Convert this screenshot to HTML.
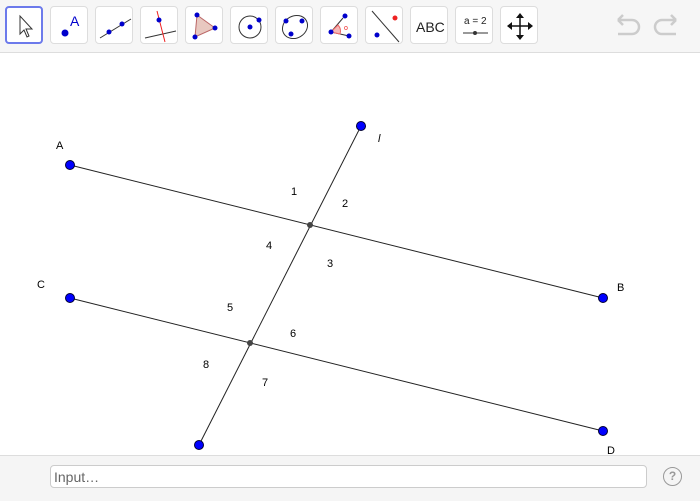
<!DOCTYPE html>
<html><head><style>
body{margin:0;width:700px;height:500px;overflow:hidden;font-family:"Liberation Sans",sans-serif;background:#fff;position:relative}
.tb{position:absolute;left:0;top:0;width:700px;height:52px;background:#f6f6f6;border-bottom:1px solid #ddd}
.b{position:absolute;top:6px;width:38px;height:38px;background:#fff;border:1px solid #ddd;border-radius:4px;box-sizing:border-box}
.b svg{position:absolute;left:0;top:0}
.bot{position:absolute;left:0;top:455px;width:700px;height:45px;background:#f5f5f5;border-top:1px solid #ddd}
.inp{position:absolute;left:50px;top:9px;width:597px;height:23px;background:#fff;border:1px solid #ccc;border-radius:4px;box-sizing:border-box;font-size:14px;color:#666;padding:3px 3px;line-height:16px}
.q{position:absolute;left:663px;top:11px;width:17px;height:17px;border:1.5px solid #999;border-radius:50%;color:#999;font-size:12px;text-align:center;line-height:17px;font-weight:bold}
</style></head><body>
<div class="tb">
<div class="b" style="left:5px;border:2px solid #6c7aeb"><svg width="36" height="36"><path d="M13 8 L13 26 L17 22 L20 29 L22 28 L19 21 L25 21 Z" fill="#fff" stroke="#333" stroke-width="1"/></svg></div>
<div class="b" style="left:50px"><svg width="38" height="38"><circle cx="14" cy="26" r="3.5" fill="#00c"/><text x="19" y="19" font-size="14" fill="#00c" font-family="Liberation Sans">A</text></svg></div>
<div class="b" style="left:95px"><svg width="38" height="38"><line x1="4" y1="31" x2="35" y2="12" stroke="#333"/><circle cx="13" cy="25" r="2.5" fill="#00c"/><circle cx="26" cy="17" r="2.5" fill="#00c"/></svg></div>
<div class="b" style="left:140px"><svg width="38" height="38"><line x1="4" y1="31" x2="35" y2="24" stroke="#333"/><line x1="16" y1="4" x2="24" y2="35" stroke="#e22"/><circle cx="18" cy="13" r="2.5" fill="#00c"/></svg></div>
<div class="b" style="left:185px"><svg width="38" height="38"><path d="M11 8 L29 21 L9 30 Z" fill="#e8c8c0" stroke="#b66"/><circle cx="11" cy="8" r="2.5" fill="#00c"/><circle cx="29" cy="21" r="2.5" fill="#00c"/><circle cx="9" cy="30" r="2.5" fill="#00c"/></svg></div>
<div class="b" style="left:230px"><svg width="38" height="38"><circle cx="19" cy="20" r="11" fill="none" stroke="#333"/><circle cx="19" cy="20" r="2.5" fill="#00c"/><circle cx="28" cy="13" r="2.5" fill="#00c"/></svg></div>
<div class="b" style="left:275px"><svg width="38" height="38"><ellipse cx="19" cy="20" rx="13" ry="11" fill="none" stroke="#333" transform="rotate(-30 19 20)"/><circle cx="10" cy="14" r="2.5" fill="#00c"/><circle cx="26" cy="14" r="2.5" fill="#00c"/><circle cx="15" cy="27" r="2.5" fill="#00c"/></svg></div>
<div class="b" style="left:320px"><svg width="38" height="38"><path d="M10 25 L22 11 M10 25 L28 29" stroke="#333"/><path d="M10 25 L17 18 A9 9 0 0 1 19 27 Z" fill="#f5b8b8" stroke="#e66"/><circle cx="10" cy="25" r="2.5" fill="#00c"/><circle cx="24" cy="9" r="2.5" fill="#00c"/><circle cx="28" cy="29" r="2.5" fill="#00c"/><text x="23" y="23" font-size="7" fill="#e22">o</text></svg></div>
<div class="b" style="left:365px"><svg width="38" height="38"><line x1="6" y1="4" x2="33" y2="35" stroke="#333"/><circle cx="29" cy="11" r="2.5" fill="#e22"/><circle cx="11" cy="28" r="2.5" fill="#00c"/></svg></div>
<div class="b" style="left:410px"><svg width="38" height="38"><text x="5" y="25" font-size="14" fill="#222" font-family="Liberation Sans">ABC</text></svg></div>
<div class="b" style="left:455px"><svg width="38" height="38"><text x="8" y="17" font-size="10" fill="#222" font-family="Liberation Sans">a = 2</text><line x1="7" y1="26" x2="32" y2="26" stroke="#333"/><circle cx="19" cy="26" r="2" fill="#333"/></svg></div>
<div class="b" style="left:500px"><svg width="38" height="38"><path d="M19 8 V31 M8 19 H30" stroke="#111" stroke-width="1.5"/><path d="M19 6 L15 11 H23Z M19 33 L15 28 H23Z M6 19 L11 15 V23Z M32 19 L27 15 V23Z" fill="#111"/></svg></div>
<svg style="position:absolute;left:612px;top:12px" width="70" height="30"><path d="M6 8 H20 A7 7 0 0 1 20 22 H6 M6 8 L11 3 M6 8 L11 13" fill="none" stroke="#ccc" stroke-width="2.5"/><path d="M64 8 H50 A7 7 0 0 0 50 22 H64 M64 8 L59 3 M64 8 L59 13" fill="none" stroke="#ccc" stroke-width="2.5"/></svg>
</div>
<svg style="position:absolute;left:0;top:0" width="700" height="455">
<g stroke="#222" stroke-width="1">
<line x1="70" y1="165" x2="603" y2="298"/><line x1="70" y1="298" x2="603" y2="431"/><line x1="199" y1="445" x2="361" y2="126"/></g>
<g fill="#00f" stroke="#003" stroke-width="1"><circle cx="70" cy="165" r="4.5"/><circle cx="603" cy="298" r="4.5"/><circle cx="70" cy="298" r="4.5"/><circle cx="603" cy="431" r="4.5"/><circle cx="361" cy="126" r="4.5"/><circle cx="199" cy="445" r="4.5"/></g>
<circle cx="310" cy="225" r="3" fill="#444"/><circle cx="250" cy="343" r="3" fill="#444"/>
<g font-size="11" fill="#000" font-family="Liberation Sans">
<text x="56" y="149">A</text><text x="617" y="291">B</text><text x="37" y="288">C</text><text x="607" y="454">D</text><text x="378" y="142" font-style="italic">l</text>
<text x="291" y="195">1</text><text x="342" y="207">2</text><text x="327" y="267">3</text><text x="266" y="249">4</text>
<text x="227" y="311">5</text><text x="290" y="337">6</text><text x="262" y="386">7</text><text x="203" y="368">8</text></g>
</svg>
<div class="bot"><div class="inp">Input…</div><div class="q">?</div></div>
</body></html>
